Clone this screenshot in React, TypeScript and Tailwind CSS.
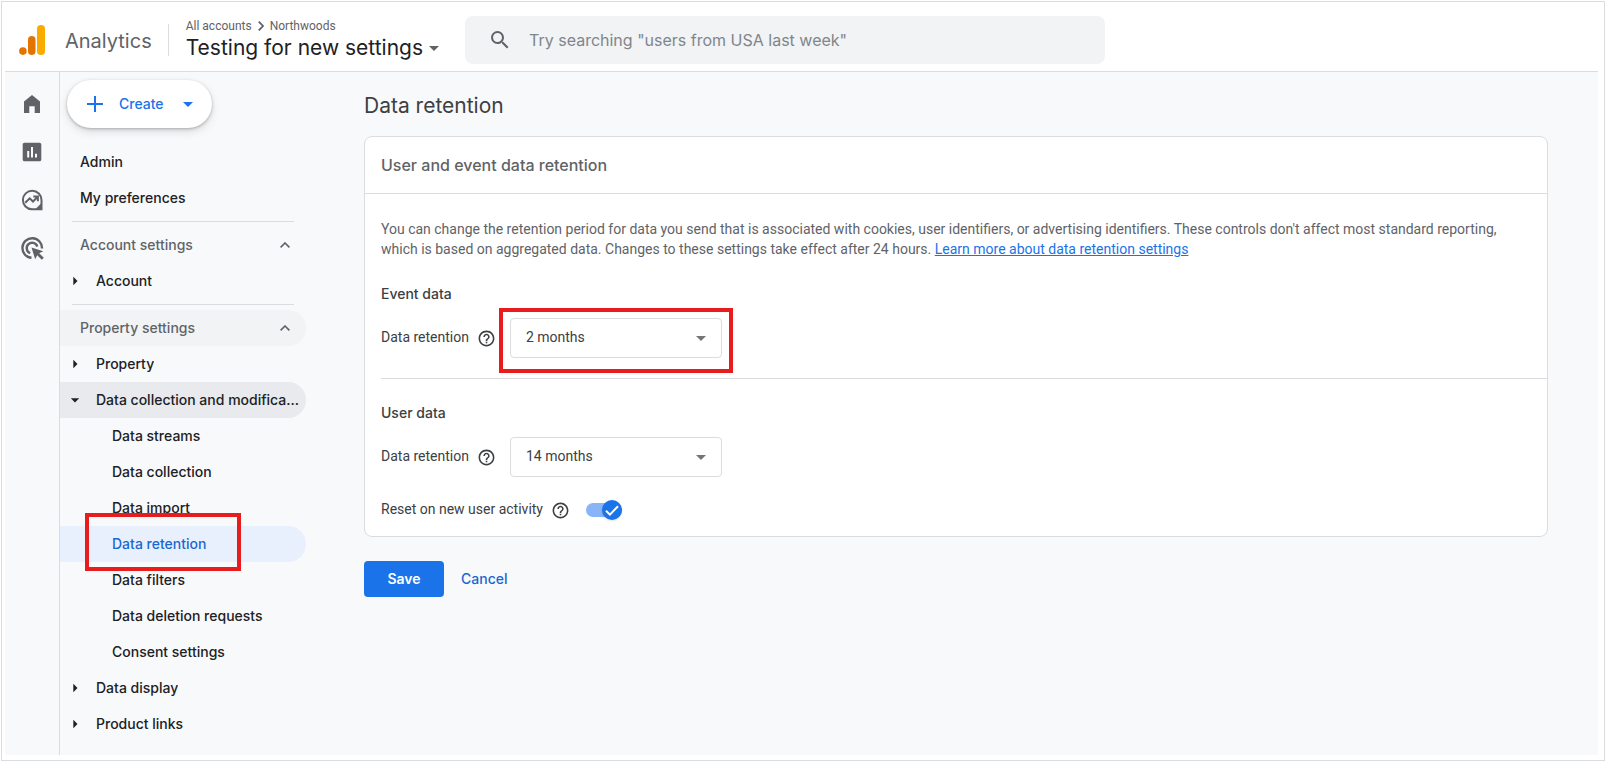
import { useState } from "react";
import type { ReactNode } from "react";
import { MdArrowDropDown, MdArrowRight, MdHelpOutline, MdSearch } from "react-icons/md";

const display = "font-['Inter','Open_Sans',sans-serif]";

function Logo() {
  return (
    <svg viewBox="0 0 26 30" className="h-[30px] w-[26px]" aria-hidden="true">
      <rect x="18" y="0" width="8" height="30" rx="4" fill="#f9ab00" />
      <rect x="9" y="11" width="7.5" height="19" rx="3.75" fill="#e37400" />
      <circle cx="3.9" cy="26.1" r="3.8" fill="#e37400" />
    </svg>
  );
}

function RailButton({ label, children }: { label: string; children: ReactNode }) {
  return (
    <button type="button" aria-label={label} className="flex size-6 items-center justify-center text-[#5f6368]">
      <svg viewBox="0 0 24 24" className="size-6" fill="currentColor" aria-hidden="true">
        {children}
      </svg>
    </button>
  );
}

function Rail() {
  return (
    <nav aria-label="Primary" className="flex w-[55px] shrink-0 flex-col items-center gap-6 border-r border-[#dadce0] pt-5">
      <RailButton label="Home">
        <path d="M4 21V9.4L12 3l8 6.400V21h-5.300v-6.800H9.300V21z" />
      </RailButton>
      <RailButton label="Reports">
        <path
          fillRule="evenodd"
          d="M4.500 2.800h15c1 0 1.800.8 1.800 1.800v14.800c0 1-.8 1.800-1.800 1.800h-15c-1 0-1.800-.8-1.800-1.800V4.600c0-1 .8-1.800 1.800-1.800zM7.200 11v6.500h2V11zM11 7v10.500h2V7zm4 6.800v3.700h2v-3.700z"
        />
      </RailButton>
      <RailButton label="Explore">
        <g fill="none" stroke="currentColor" strokeWidth="2">
          <path d="M12 21.300a9.300 9.300 0 1 1 9.500-9.300v9.300z" />
          <path d="M5.200 14.800l4.500-4.500 3.300 3.200 4.500-4.500M13.300 8.600h4.600v4.600" />
        </g>
        <path d="M15 21.500l6.500-6.500v6.500z" />
      </RailButton>
      <RailButton label="Advertising">
        <g fill="none" stroke="currentColor" strokeWidth="2.400">
          <path d="M11.500 21.800A9.800 9.800 0 1 1 22 12.500" />
          <path d="M10.200 17.200A5.400 5.400 0 1 1 17.300 10.600" />
        </g>
        <path d="M11.500 11.500l11.800 3.700-4.100 2 4.600 4.600-2 2-4.600-4.600-2 4.100z" />
      </RailButton>
    </nav>
  );
}

function Item({ children, active = false }: { children: ReactNode; active?: boolean }) {
  return (
    <a
      href="#"
      aria-current={active ? "page" : undefined}
      className={
        active
          ? "flex h-9 items-center rounded-r-full bg-[#e8f0fe] pl-[52px] text-[#1967d2]"
          : "flex h-9 items-center pl-[52px]"
      }
    >
      {active ? (
        <span className="relative">
          {children}
          <span className="pointer-events-none absolute -top-[21px] -right-[35px] -bottom-[17px] -left-[27px] border-4 border-[#e81c1c]" />
        </span>
      ) : (
        children
      )}
    </a>
  );
}

function Group({ label, open = false }: { label: string; open?: boolean }) {
  return (
    <button
      type="button"
      aria-expanded={open}
      className={
        open
          ? "flex h-9 w-full items-center rounded-r-full bg-[#e8eaed] pr-1 pl-[5px] text-left"
          : "flex h-9 w-full items-center pr-1 pl-[5px] text-left"
      }
    >
      {open ? <MdArrowDropDown className="size-5 shrink-0" /> : <MdArrowRight className="size-5 shrink-0" />}
      <span className="ml-[11px] truncate">{label}</span>
    </button>
  );
}

function Section({ label, shaded = false }: { label: string; shaded?: boolean }) {
  return (
    <button
      type="button"
      aria-expanded="true"
      className={
        shaded
          ? "flex h-9 w-full items-center justify-between rounded-r-full bg-[#f1f3f4] pr-4 pl-5 text-[#5f6368]"
          : "flex h-9 w-full items-center justify-between pr-4 pl-5 text-[#5f6368]"
      }
    >
      {label}
      <svg viewBox="0 0 10 6" className="h-[6px] w-[10px]" fill="none" stroke="currentColor" strokeWidth="1.600" aria-hidden="true">
        <path d="M.6 5.400L5 1l4.400 4.400" />
      </svg>
    </button>
  );
}

function Sidebar() {
  return (
    <aside className={`${display} w-[246px] shrink-0 pt-2 text-[14px] leading-5 font-medium text-[#202124]`}>
      <button
        type="button"
        className="ml-[7px] flex h-12 w-[145px] items-center rounded-full bg-white pl-5 text-[#1a73e8] shadow-[0_1px_3px_rgba(60,64,67,0.35),0_4px_8px_rgba(60,64,67,0.15)]"
      >
        <svg viewBox="0 0 16 16" className="size-4" stroke="currentColor" strokeWidth="2" aria-hidden="true">
          <path d="M8 0v16M0 8h16" />
        </svg>
        <span className="ml-4">Create</span>
        <svg viewBox="0 0 10 5" className="ml-auto mr-[19px] h-[5px] w-[10px]" fill="currentColor" aria-hidden="true">
          <path d="M0 0h10L5 5z" />
        </svg>
      </button>
      <nav aria-label="Admin" className="pt-4">
        <a href="#" className="flex h-9 items-center pl-5">Admin</a>
        <a href="#" className="flex h-9 items-center pl-5">My preferences</a>
        <hr className="mt-[5px] mr-3 mb-[5px] ml-3 border-[#dadce0]" />
        <Section label="Account settings" />
        <Group label="Account" />
        <hr className="mt-[5px] mr-3 mb-[5px] ml-3 border-[#dadce0]" />
        <Section label="Property settings" shaded />
        <Group label="Property" />
        <Group label="Data collection and modifica..." open />
        <Item>Data streams</Item>
        <Item>Data collection</Item>
        <Item>Data import</Item>
        <Item active>Data retention</Item>
        <Item>Data filters</Item>
        <Item>Data deletion requests</Item>
        <Item>Consent settings</Item>
        <Group label="Data display" />
        <Group label="Product links" />
      </nav>
    </aside>
  );
}

function Header() {
  return (
    <header className="flex h-[70px] items-center border-b border-[#dadce0] pt-[7px] pl-[14px]">
      <Logo />
      <span className={`${display} ml-5 pt-px text-[20px] leading-7 text-[#5f6368]`}>Analytics</span>
      <div className="ml-4 h-8 w-px bg-[#dadce0]" />
      <div className="ml-[17px]">
        <div className="flex items-center gap-[6px] text-[12px] leading-4 text-[#5f6368]">
          <a href="#">All accounts</a>
          <svg viewBox="0 0 6 10" className="h-[10px] w-[6px]" fill="none" stroke="currentColor" strokeWidth="1.800" aria-hidden="true">
            <path d="M.8.6L5 5 .8 9.400" />
          </svg>
          <a href="#">Northwoods</a>
        </div>
        <button type="button" className={`${display} flex items-center gap-[6px] text-[21px] leading-7 text-[#202124]`}>
          Testing for new settings
          <svg viewBox="0 0 10 5" className="h-[5px] w-[10px] text-[#5f6368]" fill="currentColor" aria-hidden="true">
            <path d="M0 0h10L5 5z" />
          </svg>
        </button>
      </div>
      <label className="ml-[26px] flex h-12 w-[640px] items-center rounded-lg bg-[#f1f3f4] pl-[23px] text-[#5f6368]">
        <MdSearch className="size-6" />
        <input
          type="search"
          aria-label="Search"
          placeholder={'Try searching "users from USA last week"'}
          className={`${display} ml-[17px] min-w-0 flex-1 bg-transparent text-[16px] leading-6 outline-none placeholder:text-[#80868b]`}
        />
      </label>
    </header>
  );
}

function RetentionSelect({ id, initial, marked = false }: { id: string; initial: string; marked?: boolean }) {
  const [value, setValue] = useState(initial);
  return (
    <div className="relative ml-[14px] w-[212px]">
      <select
        id={id}
        value={value}
        onChange={(e) => setValue(e.target.value)}
        className="h-10 w-full appearance-none rounded border border-[#dadce0] bg-white pb-[2px] pl-[15px] text-[14px] text-[#3c4043]"
      >
        <option>2 months</option>
        <option>14 months</option>
      </select>
      <svg viewBox="0 0 10 5" className="pointer-events-none absolute top-[18px] right-4 h-[5px] w-[10px] text-[#757575]" fill="currentColor" aria-hidden="true">
        <path d="M0 0h10L5 5z" />
      </svg>
      {marked && <span className="pointer-events-none absolute -top-[10px] -right-[11px] -bottom-[15px] -left-[11px] border-4 border-[#e81c1c]" />}
    </div>
  );
}

function Label({ htmlFor, children }: { htmlFor: string; children: ReactNode }) {
  return (
    <>
      <label htmlFor={htmlFor} className="pb-[2px]">{children}</label>
      <button type="button" aria-label="Help" className="ml-2">
        <MdHelpOutline className="size-[19px]" />
      </button>
    </>
  );
}

function Main() {
  const [reset, setReset] = useState(true);
  return (
    <main className="min-w-0 flex-1 pt-5 pr-[50px] pl-[58px]">
      <h1 className={`${display} text-[21px] leading-7 text-[#3c4043]`}>Data retention</h1>
      <section className="mt-4 rounded-lg border border-[#dadce0] bg-white pb-[15px] text-[14px] leading-5 text-[#3c4043]">
        <h2 className={`${display} flex h-[57px] items-center border-b border-[#dadce0] px-4 text-[16px] leading-6 font-medium text-[#5f6368]`}>
          User and event data retention
        </h2>
        <p className="px-4 pt-[25px] text-[#5f6368]">
          You can change the retention period for data you send that is associated with cookies, user identifiers, or
          advertising identifiers. These controls don't affect most standard reporting, which is based on aggregated
          data. Changes to these settings take effect after 24 hours.{" "}
          <a href="#" className="text-[#1a73e8] underline">Learn more about data retention settings</a>
        </p>
        <h3 className={`${display} mt-[25px] px-4 font-medium`}>Event data</h3>
        <div className="mt-[14px] flex items-center px-4">
          <Label htmlFor="event-retention">Data retention</Label>
          <RetentionSelect id="event-retention" initial="2 months" marked />
        </div>
        <hr className="mt-5 ml-4 border-[#dadce0]" />
        <h3 className={`${display} mt-6 px-4 font-medium`}>User data</h3>
        <div className="mt-[14px] flex items-center px-4">
          <Label htmlFor="user-retention">Data retention</Label>
          <RetentionSelect id="user-retention" initial="14 months" />
        </div>
        <div className="mt-[22px] flex items-center px-4">
          <Label htmlFor="reset">Reset on new user activity</Label>
          <span className="relative ml-4 flex h-5 w-9 items-center">
            <input
              id="reset"
              type="checkbox"
              role="switch"
              checked={reset}
              onChange={(e) => setReset(e.target.checked)}
              className="peer h-[14px] w-9 appearance-none rounded-full bg-[#bdc1c6] checked:bg-[#8ab4f8]"
            />
            <span className="pointer-events-none absolute left-0 flex size-5 items-center justify-center rounded-full bg-[#80868b] shadow-sm peer-checked:left-4 peer-checked:bg-[#1a73e8]">
              <svg viewBox="0 0 14 11" className="h-[11px] w-[14px]" fill="none" stroke="#fff" strokeWidth="2" aria-hidden="true">
                <path d="M1 5.800L4.900 9.600 13 1.200" />
              </svg>
            </span>
          </span>
        </div>
      </section>
      <div className={`${display} mt-6 flex h-9 text-[14px] leading-5`}>
        <button type="button" className="w-20 rounded bg-[#1a73e8] font-semibold text-white">Save</button>
        <button type="button" className="ml-[17px] font-medium text-[#1967d2]">Cancel</button>
      </div>
    </main>
  );
}

export default function App() {
  return (
    <div className="flex min-h-screen bg-white pt-px pl-px font-['Roboto','Liberation_Sans',sans-serif]">
      <div className="flex min-w-0 flex-1 flex-col border border-[#dadce0] pr-[6px] pb-[5px] pl-[3px]">
        <Header />
        <div className="flex flex-1 bg-[#f8f9fb]">
          <Rail />
          <Sidebar />
          <Main />
        </div>
      </div>
    </div>
  );
}
